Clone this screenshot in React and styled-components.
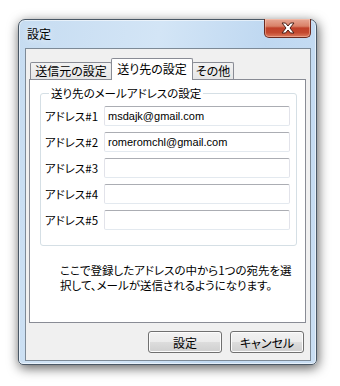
import React from 'react';
import styled, { createGlobalStyle } from 'styled-components';

const GlobalStyle = createGlobalStyle`
  html, body {
    margin: 0;
    padding: 0;
    background: #ffffff;
  }
  * {
    box-sizing: border-box;
  }
  body {
    font-family: 'Noto Sans CJK JP', 'Liberation Sans', sans-serif;
    font-size: 11.5px;
    font-feature-settings: 'palt';
    color: #000;
  }
`;

const Page = styled.div`
  padding: 19px 0 0 18px;
  width: 340px;
  height: 386px;
`;

const Window = styled.div`
  width: 299px;
  height: 346px;
  display: flex;
  flex-direction: column;
  padding: 0 5px 3px 6px;
  border: 1px solid #4a5866;
  border-radius: 7px 7px 5px 5px;
  background: linear-gradient(100deg, #c6dcf1 0%, #d3e5f6 40%, #bfd8f1 70%, #c9def3 100%);
  box-shadow: 1px 3px 12px rgba(0, 0, 0, 0.65), inset 0 0 0 1px rgba(255, 255, 255, 0.55);
`;

const TitleBar = styled.div`
  height: 28px;
  display: flex;
  justify-content: space-between;
  align-items: flex-start;
  padding-left: 2px;
`;

const Title = styled.span`
  margin-top: 7px;
  line-height: 14px;
  font-size: 12px;
  color: #000;
  text-shadow: 0 0 6px rgba(255, 255, 255, 0.9);
`;

const CloseButton = styled.div`
  width: 47px;
  height: 19px;
  margin-top: -1px;
  display: flex;
  align-items: center;
  justify-content: center;
  border: 1px solid #6b2a20;
  border-top: none;
  border-radius: 0 0 5px 5px;
  background: linear-gradient(#e7a895 0%, #d98168 40%, #c0412a 50%, #c4492f 75%, #dc7a5e 100%);
  box-shadow: inset 0 0 0 1px rgba(255, 210, 190, 0.45);
`;

const Client = styled.div`
  flex: 1;
  display: flex;
  flex-direction: column;
  padding: 9px 6px 7px 3px;
  border: 1px solid #7d8a97;
  background: #f0f0f0;
`;

const TabRow = styled.div`
  height: 21px;
  display: flex;
  align-items: flex-end;
  padding-left: 1px;
  position: relative;
  z-index: 1;
`;

const Tab = styled.div`
  width: ${(p) => p.$w}px;
  height: ${(p) => (p.$active ? 22 : 17)}px;
  margin-bottom: ${(p) => (p.$active ? -1 : 0)}px;
  margin-left: ${(p) => (p.$first ? 0 : -1)}px;
  display: flex;
  align-items: center;
  justify-content: center;
  padding-bottom: ${(p) => (p.$active ? 2 : 0)}px;
  border: 1px solid #898c95;
  border-bottom: none;
  border-radius: 2px 2px 0 0;
  background: ${(p) => (p.$active ? '#ffffff' : 'linear-gradient(#f2f2f2, #e6e6e6)')};
  font-size: 12px;
  line-height: 14px;
  white-space: nowrap;
`;

const Panel = styled.div`
  width: 277px;
  height: 244px;
  display: flex;
  flex-direction: column;
  border: 1px solid #898c95;
  background: #ffffff;
  padding: 6px 8px 0 10px;
`;

const Group = styled.fieldset`
  margin: 0;
  width: 257px;
  height: 160px;
  padding: 6px 5px 0 4px;
  border: 1px solid #d5dfe5;
  border-radius: 3px;
  min-inline-size: auto;
`;

const Legend = styled.legend`
  margin-left: 4px;
  padding: 0 2px;
  line-height: 14px;
  font-size: 11.5px;
`;

const Fields = styled.div`
  display: grid;
  grid-template-columns: 59px 186px;
  grid-auto-rows: 20px;
  row-gap: 6px;
  align-items: center;
`;

const Label = styled.label`
  line-height: 14px;
  white-space: nowrap;
`;

const Input = styled.input`
  width: 186px;
  height: 20px;
  margin: 0;
  padding: 0 3px;
  border: 1px solid #e2e3ea;
  border-top-color: #abadb3;
  border-bottom-color: #e3e9ef;
  border-radius: 2px;
  font-family: 'Liberation Sans', 'Noto Sans CJK JP', sans-serif;
  font-size: 11px;
  color: #000;
  background: #fff;
  outline: none;
`;

const Note = styled.p`
  margin: 17px 0 0 20px;
  line-height: 15px;
  white-space: nowrap;
`;

const ButtonRow = styled.div`
  margin-top: 8px;
  display: flex;
  justify-content: flex-end;
  gap: 8px;
`;

const Button = styled.button`
  width: 74px;
  height: 22px;
  padding: 0;
  border: 1px solid #707070;
  border-radius: 3px;
  background: linear-gradient(#f2f2f2 0%, #ebebeb 50%, #dddddd 51%, #cfcfcf 100%);
  box-shadow: inset 0 0 0 1px #fcfcfc;
  font-family: 'Noto Sans CJK JP', 'Liberation Sans', sans-serif;
  font-size: 12px;
  font-feature-settings: 'palt';
  color: #000;
`;

const CloseIcon = () => (
  <svg width="16" height="12" viewBox="0 0 16 12">
    <path
      d="M2 1 H5.5 L8 4 L10.5 1 H14 L10 6 L14 11 H10.5 L8 8 L5.5 11 H2 L6 6 Z"
      fill="#ffffff"
      stroke="#4a2018"
      strokeWidth="1"
      strokeLinejoin="round"
    />
  </svg>
);

const addresses = ['msdajk@gmail.com', 'romeromchl@gmail.com', '', '', ''];

export default function App() {
  return (
    <>
      <GlobalStyle />
      <Page>
        <Window>
          <TitleBar>
            <Title>設定</Title>
            <CloseButton>
              <CloseIcon />
            </CloseButton>
          </TitleBar>
          <Client>
            <TabRow>
              <Tab $w={82} $first>送信元の設定</Tab>
              <Tab $w={82} $active>送り先の設定</Tab>
              <Tab $w={42}>その他</Tab>
            </TabRow>
            <Panel>
              <Group>
                <Legend>送り先のメールアドレスの設定</Legend>
                <Fields>
                  {addresses.map((addr, i) => (
                    <React.Fragment key={i}>
                      <Label>アドレス#{i + 1}</Label>
                      <Input defaultValue={addr} />
                    </React.Fragment>
                  ))}
                </Fields>
              </Group>
              <Note>
                ここで登録したアドレスの中から1つの宛先を選
                <br />
                択して、メールが送信されるようになります。
              </Note>
            </Panel>
            <ButtonRow>
              <Button>設定</Button>
              <Button>キャンセル</Button>
            </ButtonRow>
          </Client>
        </Window>
      </Page>
    </>
  );
}
